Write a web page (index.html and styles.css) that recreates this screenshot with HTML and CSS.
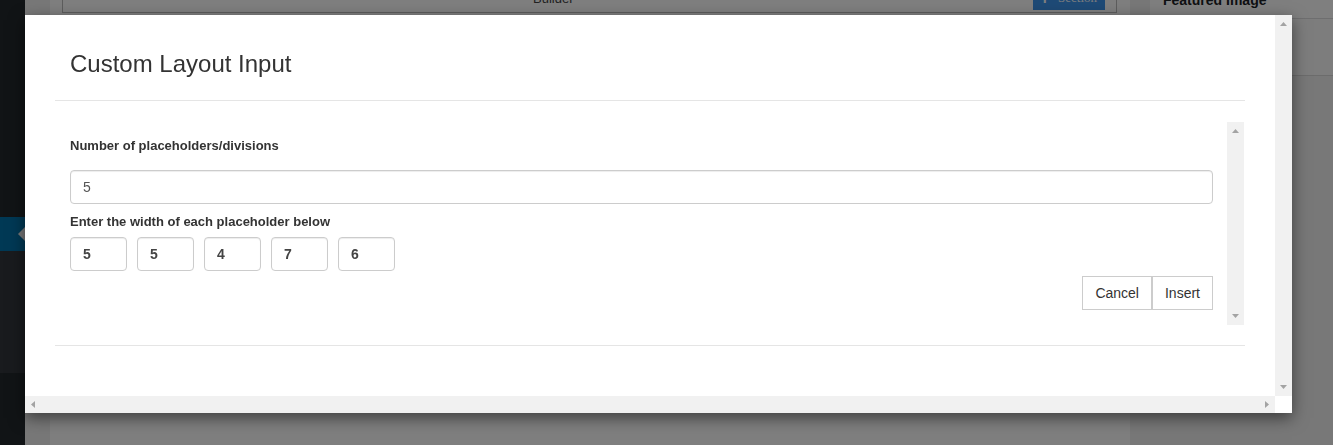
FILE: index.html
```html
<!DOCTYPE html>
<html lang="en">

<head>
    <meta charset="UTF-8">
    <meta name="viewport" content="width=device-width, initial-scale=1.0">
    <title>Custom Layout Input</title>
    <link rel="stylesheet" href="styles.css">
</head>

<body>
    <div class="admin">
        <nav class="adminmenu">
            <div class="menu-item current"></div>
            <div class="submenu"></div>
        </nav>
        <div class="wrap">
            <main class="editor">
                <div class="builder-bar">
                    <span class="builder-title">Builder</span>
                    <span class="btn-section"><span class="plus">+</span> Section</span>
                </div>
                <div class="cols">
                    <div class="col"></div>
                    <div class="col"></div>
                </div>
            </main>
            <aside class="side">
                <div class="postbox">
                    <h2>Featured Image</h2>
                    <div class="postbox-inside"></div>
                </div>
            </aside>
        </div>
    </div>

    <div class="backdrop"></div>

    <div class="modal">
        <div class="modal-content">
            <div class="modal-header">
                <h4 class="modal-title">Custom Layout Input</h4>
            </div>
            <div class="modal-body">
                <div class="body-scroll">
                    <form class="layout-form">
                        <label class="label-count" for="count">Number of placeholders/divisions</label>
                        <input type="text" id="count" class="form-control" value="5">
                        <label class="label-width">Enter the width of each placeholder below</label>
                        <div class="widths">
                            <input type="text" class="width-input" value="5">
                            <input type="text" class="width-input" value="5">
                            <input type="text" class="width-input" value="4">
                            <input type="text" class="width-input" value="7">
                            <input type="text" class="width-input" value="6">
                        </div>
                        <div class="actions">
                            <button type="button" class="btn">Cancel</button>
                            <button type="button" class="btn">Insert</button>
                        </div>
                    </form>
                    <div class="scrollbar-v inner">
                        <span class="arrow up"></span>
                        <span class="arrow down"></span>
                    </div>
                </div>
            </div>
            <div class="modal-footer"></div>
        </div>
        <div class="scrollbar-v">
            <span class="arrow up"></span>
            <span class="arrow down"></span>
        </div>
        <div class="scrollbar-h">
            <span class="arrow left"></span>
            <span class="arrow right"></span>
        </div>
        <div class="corner"></div>
    </div>
</body>

</html>
```

FILE: styles.css
```css
body {
    margin: 0;
    width: 1333px;
    height: 445px;
    overflow: hidden;
    font-family: "Liberation Sans", Arial, sans-serif;
    background-color: #f0f0f1;
}

/* page behind the dialog */
.admin {
    display: flex;
    height: 445px;
}

.adminmenu {
    width: 25px;
    padding-top: 217px;
    background-color: #23282d;
}

.menu-item {
    position: relative;
    height: 34px;
    background-color: #0073aa;
}

.menu-item.current::after {
    content: "";
    position: absolute;
    right: 0;
    top: 10px;
    border: 7px solid transparent;
    border-right-color: #f1f1f1;
}

.submenu {
    height: 122px;
    background-color: #32373c;
}

.wrap {
    flex: 1;
    display: flex;
    padding-left: 25px;
}

.editor {
    width: 1068px;
    padding-left: 12px;
    background-color: #fff;
}

.builder-bar {
    display: flex;
    align-items: flex-start;
    width: 1055px;
    height: 33px;
    margin-top: -20px;
    box-sizing: border-box;
    border: 1px solid #bbb;
    border-top: none;
}

.builder-title {
    margin: 11px 0 0 470px;
    font-size: 13px;
    line-height: 15px;
    color: #444;
}

.btn-section {
    display: flex;
    align-items: center;
    gap: 8px;
    margin: 6px 11px 0 auto;
    height: 24px;
    padding: 0 8px 0 6px;
    background-color: #3d95ec;
    color: #f4f8ff;
    font-family: "Liberation Serif", serif;
    font-size: 13px;
}

.plus {
    font-family: "Liberation Sans", sans-serif;
    font-weight: bold;
    font-size: 18px;
    color: #fff;
}

.cols {
    display: flex;
    gap: 2px;
    margin: 360px 0 0 2px;
}

.col {
    width: 349px;
    height: 38px;
    background-color: #d9d9d9;
}

.side {
    padding-left: 20px;
    flex: 1;
}

.postbox {
    margin-top: -17px;
    background-color: #fff;
    border-bottom: 1px solid #d8d8d8;
}

.postbox h2 {
    margin: 0;
    padding: 8px 12px 8px 13px;
    font-size: 14px;
    line-height: 19px;
    font-weight: 600;
    color: #1d2327;
    border-bottom: 1px solid #dcdcde;
}

.postbox-inside {
    height: 56px;
    background-color: #fbfbfb;
}

.backdrop {
    position: fixed;
    inset: 0;
    background-color: rgba(0, 0, 0, 0.5);
}

/* dialog */
.modal {
    position: absolute;
    left: 25px;
    top: 15px;
    display: grid;
    grid-template-columns: 1250px 17px;
    grid-template-rows: 381px 17px;
    background-color: #fff;
    color: #333;
    box-shadow: 0 5px 15px rgba(0, 0, 0, 0.5);
}

.modal-content {
    padding: 0 30px;
    overflow: hidden;
}

.modal-header {
    padding: 36px 15px 23px;
    border-bottom: 1px solid #e5e5e5;
}

.modal-title {
    margin: 0;
    font-size: 24px;
    line-height: 26px;
    font-weight: normal;
}

.modal-body {
    padding: 21px 0 20px;
}

.body-scroll {
    display: flex;
    margin-right: 1px;
}

.layout-form {
    flex: 1;
    margin: 0;
    padding: 14px 14px 15px 15px;
}

label {
    display: block;
    font-size: 13px;
    line-height: 20px;
    font-weight: bold;
}

.label-count {
    margin-bottom: 14px;
}

.label-width {
    margin: 8px 0 5px;
}

input[type="text"] {
    box-sizing: border-box;
    height: 34px;
    padding: 6px 12px;
    font-family: inherit;
    font-size: 14px;
    line-height: 20px;
    color: #555;
    background-color: #fff;
    border: 1px solid #ccc;
    border-radius: 4px;
    box-shadow: inset 0 1px 1px rgba(0, 0, 0, 0.075);
    outline: none;
}

.form-control {
    display: block;
    width: 100%;
}

.widths {
    display: flex;
    gap: 10px;
}

.width-input {
    width: 57px;
    font-weight: bold;
    color: #444 !important;
}

.actions {
    display: flex;
    justify-content: flex-end;
    margin-top: 5px;
}

.btn {
    height: 34px;
    padding: 6px 12px;
    font-family: inherit;
    font-size: 14px;
    line-height: 20px;
    color: #333;
    background-color: #fff;
    border: 1px solid #ccc;
    border-radius: 0;
}

.modal-footer {
    border-top: 1px solid #e5e5e5;
}

/* scrollbars */
.scrollbar-v {
    display: flex;
    flex-direction: column;
    justify-content: space-between;
    align-items: center;
    padding: 7px 0;
    background-color: #f1f1f1;
}

.scrollbar-v.inner {
    width: 17px;
}

.scrollbar-h {
    display: flex;
    justify-content: space-between;
    align-items: center;
    padding: 0 6px;
    background-color: #f1f1f1;
}

.corner {
    background-color: #fff;
}

.arrow {
    display: block;
    background-color: #a3a3a3;
}

.arrow.up,
.arrow.down {
    width: 7px;
    height: 4px;
}

.arrow.left,
.arrow.right {
    width: 4px;
    height: 7px;
}

.arrow.up {
    clip-path: polygon(50% 0, 100% 100%, 0 100%);
}

.arrow.down {
    clip-path: polygon(0 0, 100% 0, 50% 100%);
}

.arrow.left {
    clip-path: polygon(100% 0, 100% 100%, 0 50%);
}

.arrow.right {
    clip-path: polygon(0 0, 100% 50%, 0 100%);
}
```
